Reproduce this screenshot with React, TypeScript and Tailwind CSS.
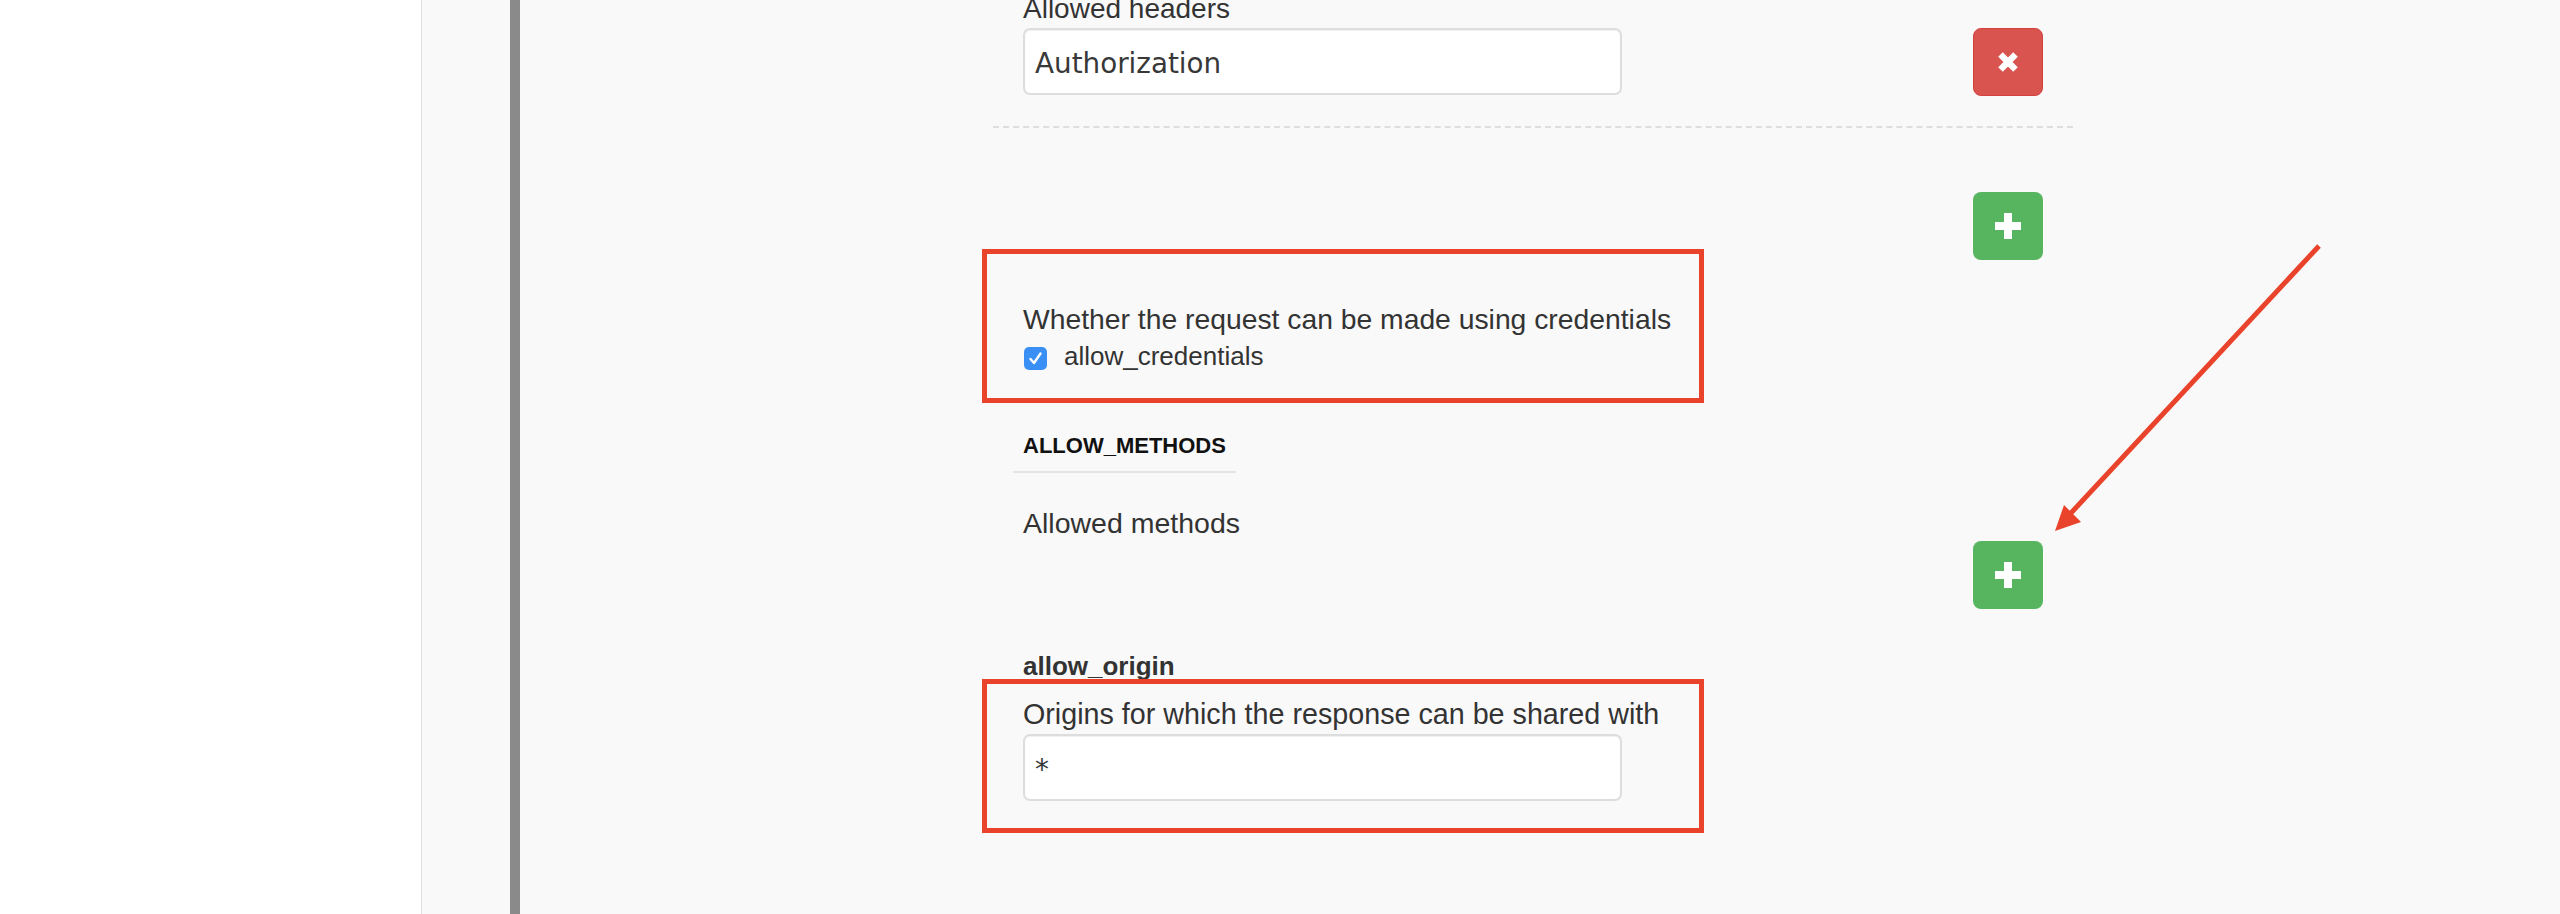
import React from "react";

function RemoveButton() {
  return (
    <button
      type="button"
      className="w-[70px] h-[68px] shrink-0 rounded-[8px] bg-[#d9534f] border border-[#d2433e] flex items-center justify-center"
    >
      <svg width="24" height="24" viewBox="0 0 24 24">
        <path d="M4.5 4.5 L19.5 19.5 M19.5 4.5 L4.5 19.5" stroke="#ffffff" strokeWidth="6.5" strokeLinecap="butt" fill="none" />
      </svg>
    </button>
  );
}

function AddButton() {
  return (
    <button
      type="button"
      className="w-[70px] h-[68px] shrink-0 rounded-[8px] bg-[#57b560] flex items-center justify-center"
    >
      <svg width="26" height="26" viewBox="0 0 26 26">
        <rect x="9" y="0" width="8" height="26" fill="#ffffff" />
        <rect x="0" y="9" width="26" height="8" fill="#ffffff" />
      </svg>
    </button>
  );
}

function TextInput({ value }: { value: string }) {
  return (
    <input
      readOnly
      value={value}
      className="w-[599px] h-[67px] shrink-0 rounded-[7px] border-2 border-[#dddddd] bg-white pl-[10px] pr-[10px] pt-[4px] text-[27.8px] text-[#383838] font-['DejaVu_Sans',sans-serif] shadow-[inset_0_1px_1px_rgba(0,0,0,0.06)] outline-none"
    />
  );
}

export default function App() {
  return (
    <div className="relative flex w-[2560px] h-[914px] overflow-hidden font-['Liberation_Sans',Arial,sans-serif] text-[#333333]">
      <div className="w-[422px] shrink-0 bg-white border-r border-[#dddddd]" />
      <div className="flex-1 flex bg-[#f9f9f9]">
        <div className="ml-[88px] w-[10px] shrink-0 bg-[#8a8a8a]" />
        <div className="ml-[473px] w-[1080px] flex flex-col">
          <div className="-mt-[7px] pl-[30px] text-[28px] leading-[32px]">Allowed headers</div>
          <div className="mt-[3px] flex items-start">
            <div className="ml-[30px]">
              <TextInput value="Authorization" />
            </div>
            <div className="ml-[351px]">
              <RemoveButton />
            </div>
          </div>
          <div className="mt-[30px] w-[1080px] border-t-2 border-dashed border-[#dedede]" />
          <div className="mt-[64px] flex">
            <div className="ml-[980px]">
              <AddButton />
            </div>
          </div>

          <div className="-mt-[11px] -ml-[11px] w-[722px] h-[154px] shrink-0 border-[5px] border-[#e9432b] pl-[36px] pt-[49px] flex flex-col">
            <div className="text-[28.3px] leading-[32px]">Whether the request can be made using credentials</div>
            <div className="mt-[6px] flex items-start">
              <div className="mt-[6px] ml-[1px] w-[23px] h-[23px] rounded-[5px] bg-[#3a8ff5] flex items-center justify-center">
                <svg width="23" height="23" viewBox="0 0 23 23">
                  <path d="M6.5 12 L10 16 L16.5 6.5" stroke="#ffffff" strokeWidth="2.4" strokeLinecap="round" strokeLinejoin="round" fill="none" />
                </svg>
              </div>
              <span className="ml-[17px] text-[26px] leading-[30px]">allow_credentials</span>
            </div>
          </div>

          <div className="mt-[30px] ml-[20px] self-start px-[10px] pb-[12px] border-b-2 border-[#e5e5e5] text-[22px] leading-[26px] font-bold text-[#111111]">
            ALLOW_METHODS
          </div>
          <div className="mt-[34px] pl-[30px] text-[28.5px] leading-[32px]">Allowed methods</div>
          <div className="mt-[2px] flex">
            <div className="ml-[980px]">
              <AddButton />
            </div>
          </div>

          <div className="mt-[42px] pl-[30px] text-[26px] leading-[30px] font-bold">allow_origin</div>
          <div className="-mt-[2px] -ml-[11px] w-[722px] h-[154px] shrink-0 border-[5px] border-[#e9432b] pl-[36px] pt-[14px] flex flex-col">
            <div className="text-[28.7px] leading-[32px]">Origins for which the response can be shared with</div>
            <div className="mt-[4px]">
              <TextInput value="*" />
            </div>
          </div>
        </div>
      </div>

      <svg
        className="absolute left-0 top-0 pointer-events-none"
        width="2560"
        height="914"
        viewBox="0 0 2560 914"
      >
        <line x1="2319" y1="246" x2="2071" y2="513" stroke="#e9432b" strokeWidth="5" strokeLinecap="butt" />
        <polygon points="2055,531 2081,522 2064,505" fill="#e9432b" />
      </svg>
    </div>
  );
}
